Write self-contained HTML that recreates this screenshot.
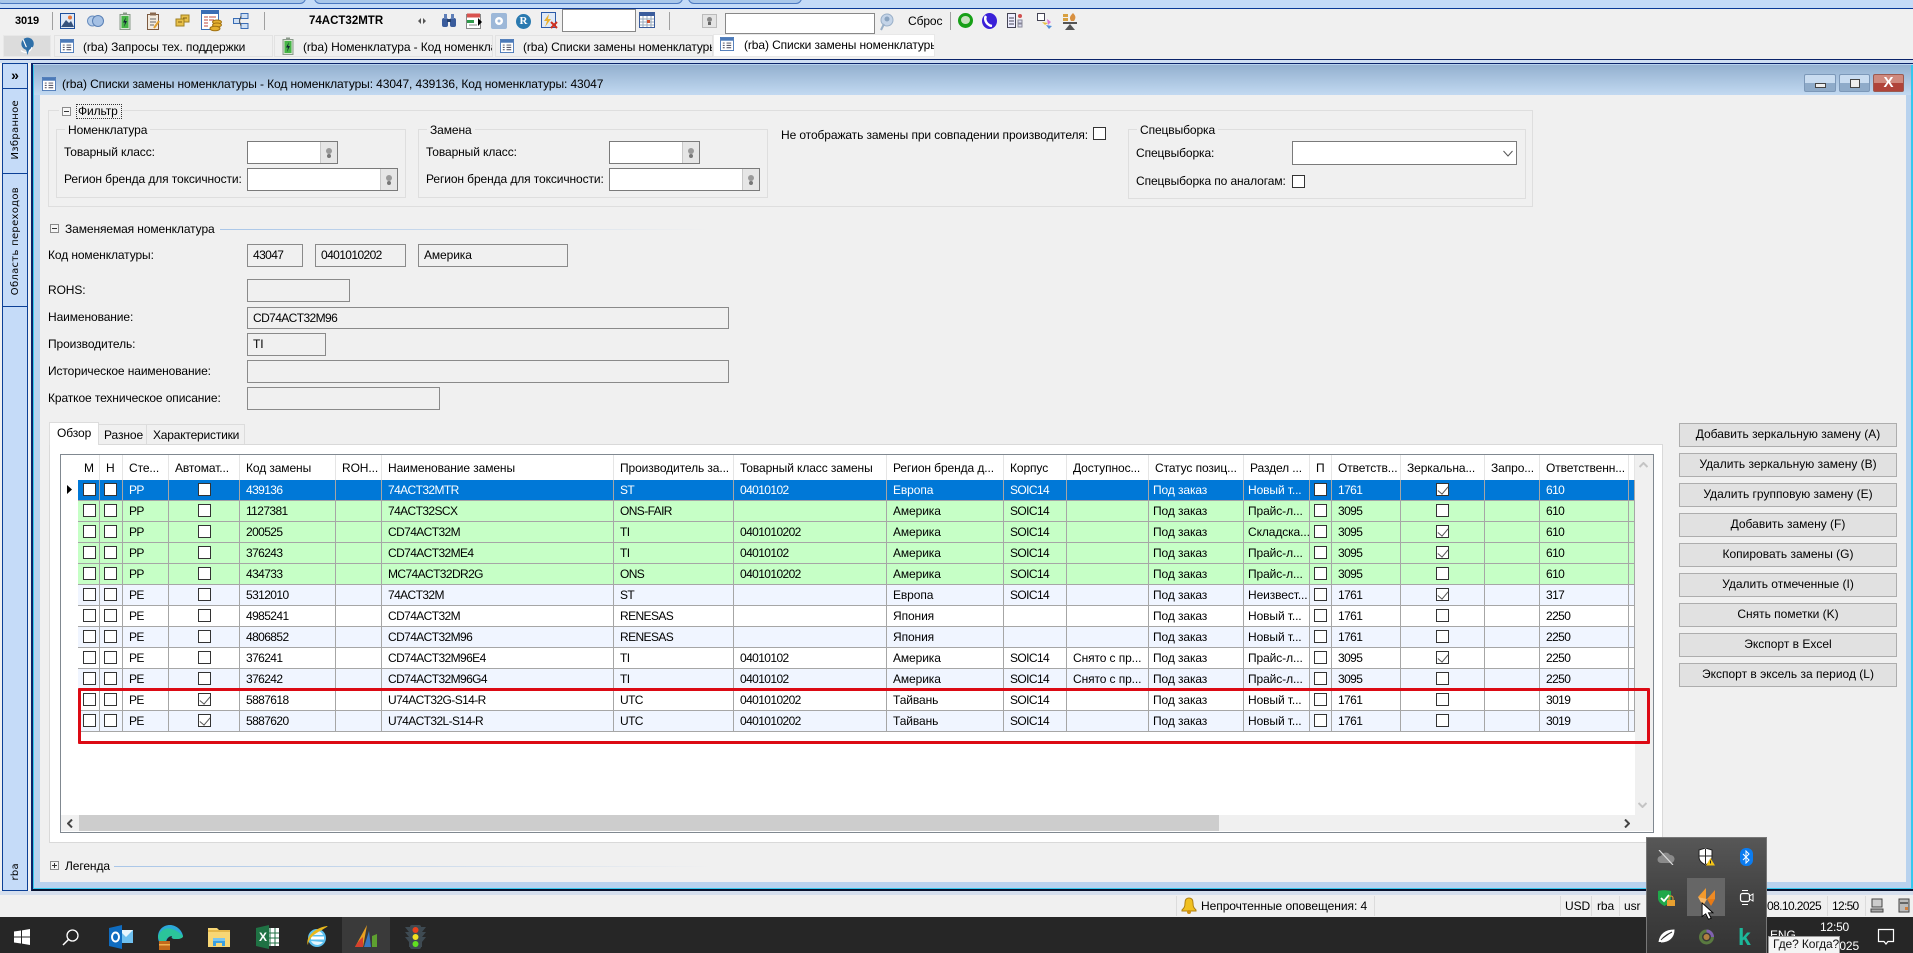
<!DOCTYPE html>
<html lang="ru"><head><meta charset="utf-8"><title>Списки замены номенклатуры</title>
<style>
*{box-sizing:border-box}
html,body{margin:0;padding:0;width:1913px;height:953px;overflow:hidden;background:#f0f0f0}
body{position:relative;font:12px/16px "Liberation Sans","Noto Sans CJK SC",sans-serif;color:#000}
.a,.t,.b,.i,svg.s{position:absolute}
.t{white-space:nowrap;height:16px;letter-spacing:-.1px}
.b{border:1px solid #8a8a8a;background:#f0f0f0;padding:2px 5px 0;line-height:17px;white-space:nowrap;letter-spacing:-.1px}
.d{letter-spacing:-.6px}
.w{background:#fff;border:1px solid #7a7a7a}
.pk{position:absolute;right:0;top:0;bottom:0;width:17px;background:#e6e6e6;border-left:1px solid #c8c8c8}
.pk:after{content:"";position:absolute;left:5px;top:6px;width:6px;height:6px;border-radius:50%;background:#9a9a9a;box-shadow:0 5px 0 -1px #777}
.fs{position:absolute;border:1px solid #dedede}
.cb{position:absolute;width:13px;height:13px;background:#fff;border:1px solid #333}
.tg{position:absolute;width:9px;height:9px;border:1px solid #8b8b8b;background:#f6f6f6}
.tg:before{content:"";position:absolute;left:1px;top:3px;width:5px;height:1px;background:#333}
.tg.p:after{content:"";position:absolute;left:3px;top:1px;width:1px;height:5px;background:#333}
.tb{position:absolute;top:35px;height:22px;background:#f0f0f0;border:1px solid #e2e2e2;overflow:hidden;white-space:nowrap;padding:3px 0 0;letter-spacing:-.1px}
.btn{position:absolute;left:1679px;width:218px;height:24px;background:#e1e1e1;border:1px solid #adadad;text-align:center;line-height:21px;white-space:nowrap}
.side{position:absolute;left:2px;width:26px;background:#c5dbf8;border:1px solid #0b3f96}
.vt{position:absolute;left:6px;writing-mode:vertical-rl;transform:rotate(180deg);font:10px/13px "DejaVu Sans",sans-serif;white-space:nowrap;letter-spacing:.3px}
table{position:absolute;left:78px;top:455px;width:1557px;border-collapse:separate;border-spacing:0;table-layout:fixed;background:#fff}
th{height:25px;font-weight:normal;text-align:left;padding:0 0 0 6px;border-right:1px solid #e5e5e5;white-space:nowrap;overflow:hidden;letter-spacing:-.1px}
td{height:21px;padding:0 0 0 6px;border-right:1px solid #a6a6a6;border-bottom:1px solid #a6a6a6;white-space:nowrap;overflow:hidden;position:relative;letter-spacing:-.1px}
td:nth-child(3),td:nth-child(5),td:nth-child(7),td:nth-child(8),td:nth-child(9),td:nth-child(11),td:nth-child(16),td:nth-child(19){letter-spacing:-.6px}
td.n{padding-left:4px}
td i{position:absolute;left:5px;top:3px;width:13px;height:13px;background:#fff;border:1px solid #333;display:block}
td i.m{left:29px}
td i.m2{left:35px}
td i.k:after{content:"";position:absolute;left:3px;top:0;width:5px;height:9px;border:solid #555;border-width:0 1px 1px 0;transform:rotate(40deg)}
tr.s td{background:#0078d7;color:#fff}
tr.g td{background:#c6ffc6}
tr.e td{background:#f0f5ff}
tr.o td{background:#fff}
.sep{position:absolute;width:1px;background:#a0a0a0}
.ss{position:absolute;top:896px;height:20px;width:1px;background:#dcdcdc}
</style></head><body>
<svg width="0" height="0" style="position:absolute"><defs>
<symbol id="doc" viewBox="0 0 15 15"><rect x=".5" y=".5" width="14" height="14" fill="#fff" stroke="#4c7ab8"/><rect x="1" y="1" width="13" height="3" fill="#4c7ab8"/><path d="M3 6.5h2M7 6.5h5M3 9h2M7 9h5M3 11.5h2M7 11.5h5" stroke="#445" stroke-width="1"/></symbol>
<symbol id="bat" viewBox="0 0 12 18"><rect x="1" y="2.500" width="10" height="15" fill="#d7e6d2" stroke="#8a9a8a"/><rect x="4" y=".5" width="4" height="2" fill="#8a9a8a"/><rect x="2.500" y="4" width="7" height="12" fill="#46b546"/><path d="M7 5 4 10.500h2L5 15l3-6H6z" fill="#123"/></symbol>
</defs></svg>

<!-- top band -->
<div class="a" style="left:0;top:0;width:1913px;height:8px;background:#c4dbf8"></div>
<div class="a" style="left:-4px;top:-3px;width:310px;height:7px;background:#a9c7ea;border:1px solid #4a78c0;border-radius:0 0 6px 6px"></div>
<div class="a" style="left:314px;top:-3px;width:369px;height:7px;background:#a9c7ea;border:1px solid #4a78c0;border-radius:0 0 6px 6px"></div>
<div class="a" style="left:688px;top:-3px;width:114px;height:7px;background:#a9c7ea;border:1px solid #4a78c0;border-radius:0 0 6px 6px"></div>
<div class="a" style="left:0;top:8px;width:1913px;height:1px;background:#0b3a96"></div>

<!-- toolbar -->
<div class="t" style="left:15px;top:13px;font-weight:bold;font-size:11px">3019</div>
<div class="sep" style="left:52px;top:12px;height:18px"></div>
<svg class="s" style="left:60px;top:13px" width="15" height="16" viewBox="0 0 15 16"><rect x=".5" y=".5" width="14" height="15" fill="#dfe9f6" stroke="#1c4f9c"/><path d="M1 14 6 7l3 3 2-2 3 6z" fill="#35527c"/><circle cx="10" cy="4.500" r="2" fill="#e8773a"/></svg>
<svg class="s" style="left:87px;top:14px" width="17" height="14" viewBox="0 0 17 14"><circle cx="5.500" cy="7" r="5" fill="#b5cdea" stroke="#6a8fc0"/><circle cx="11" cy="7" r="5.500" fill="#a4c0e4" stroke="#5a80b5"/></svg>
<svg class="s" style="left:119px;top:12px" width="12" height="18"><use href="#bat"/></svg>
<svg class="s" style="left:147px;top:12px" width="13" height="18" viewBox="0 0 13 18"><rect x=".5" y="2.500" width="11" height="15" fill="#f4ece0" stroke="#7c5a40"/><rect x="3" y=".5" width="6" height="3" fill="#8a6a50"/><path d="M3 7h6M3 10h6M3 13h4" stroke="#666"/><path d="M12 9l-5 7" stroke="#e0a030" stroke-width="2"/></svg>
<svg class="s" style="left:175px;top:14px" width="15" height="14" viewBox="0 0 15 14"><rect x="6" y="1" width="8" height="7" fill="#e8c04a" stroke="#a08020"/><rect x="1" y="5" width="8" height="7" fill="#e8c04a" stroke="#a08020"/><path d="M3 8h4M8 4h4" stroke="#806010"/></svg>
<svg class="s" style="left:201px;top:10px" width="22" height="22" viewBox="0 0 22 22"><rect x=".5" y=".5" width="17" height="19" fill="#fff" stroke="#3a6db5"/><rect x="1" y="1" width="16" height="3" fill="#3a6db5"/><path d="M3 7h4M8 7h7M3 10h4M8 10h5M3 13h4M3 16h4" stroke="#c0483c"/><ellipse cx="16" cy="12" rx="4.500" ry="2" fill="#e5b030" stroke="#a07010"/><ellipse cx="16" cy="15" rx="4.500" ry="2" fill="#e5b030" stroke="#a07010"/><ellipse cx="14" cy="18.500" rx="5" ry="2.300" fill="#e5b030" stroke="#a07010"/></svg>
<svg class="s" style="left:233px;top:13px" width="16" height="16" viewBox="0 0 16 16"><rect x="8" y=".5" width="7" height="5" fill="#cfe0f4" stroke="#3a6db5"/><rect x=".5" y="5.500" width="6" height="5" fill="#cfe0f4" stroke="#3a6db5"/><rect x="8" y="10.500" width="7" height="5" fill="#cfe0f4" stroke="#3a6db5"/><path d="M6.500 8 8 3M6.500 8 8 13" stroke="#555" fill="none"/></svg>
<div class="sep" style="left:264px;top:12px;height:18px"></div>
<div class="t" style="left:309px;top:13px;font-weight:bold;font-size:11.5px;letter-spacing:0">74ACT32MTR</div>
<svg class="s" style="left:418px;top:17px" width="8" height="8" viewBox="0 0 8 8"><path d="M3 1 0 4l3 3zM5 1l3 3-3 3z" fill="#555"/></svg>
<svg class="s" style="left:441px;top:13px" width="16" height="15" viewBox="0 0 16 15"><rect x="1" y="5" width="6" height="9" rx="2" fill="#3a5c9c"/><rect x="9" y="5" width="6" height="9" rx="2" fill="#3a5c9c"/><rect x="3" y="1" width="3" height="5" fill="#5f7fb8"/><rect x="10" y="1" width="3" height="5" fill="#5f7fb8"/><rect x="6" y="6" width="4" height="3" fill="#24406e"/></svg>
<svg class="s" style="left:466px;top:12px" width="16" height="18" viewBox="0 0 16 18"><rect x=".5" y="2.500" width="14" height="14" fill="#fff" stroke="#888"/><rect x="1" y="1.500" width="13" height="4" fill="#d9534f"/><rect x="1" y="8" width="7" height="3" fill="#2e9a4a"/><path d="M3 13h8" stroke="#888"/><path d="M12 6l4 4-4 4z" fill="#000"/></svg>
<svg class="s" style="left:491px;top:13px" width="16" height="16" viewBox="0 0 16 16"><rect width="16" height="16" rx="2" fill="#9db8d8"/><circle cx="8" cy="8" r="4" fill="#fff"/><circle cx="8" cy="8" r="1.500" fill="#9db8d8"/></svg>
<div class="a" style="left:516px;top:14px;width:15px;height:15px;border-radius:50%;background:#2a7ab0;color:#fff;font:bold 11px/15px 'Liberation Serif',serif;text-align:center">R</div>
<svg class="s" style="left:541px;top:12px" width="17" height="18" viewBox="0 0 17 18"><rect x=".5" y=".5" width="14" height="15" fill="#dfe9f6" stroke="#2a5aa8"/><path d="M8 2 3 9h3L4 15l6-8H7z" fill="#e8b030"/><path d="M10 10l6 6M16 10l-6 6" stroke="#d03020" stroke-width="2"/></svg>
<div class="a w" style="left:562px;top:9px;width:74px;height:23px;border-color:#888"></div>
<svg class="s" style="left:639px;top:12px" width="16" height="16" viewBox="0 0 16 16"><rect x=".5" y=".5" width="15" height="15" fill="#fff" stroke="#3a5c9c"/><rect x="1" y="1" width="14" height="3" fill="#3a5c9c"/><path d="M1 7h14M1 10h14M1 13h14M4 4v11M8 4v11M12 4v11" stroke="#9ab"/><rect x="8" y="8" width="3" height="3" fill="#d05030"/></svg>
<div class="sep" style="left:669px;top:12px;height:18px"></div>
<div class="a" style="left:702px;top:14px;width:15px;height:14px;background:#e4e4e4;border:1px solid #bbb"><span class="a" style="left:4px;top:2px;width:5px;height:5px;border-radius:50%;background:#888"></span><span class="a" style="left:5px;top:7px;width:3px;height:3px;background:#666"></span></div>
<div class="a w" style="left:725px;top:13px;width:150px;height:21px;border-color:#888"></div>
<svg class="s" style="left:879px;top:13px" width="15" height="18" viewBox="0 0 15 18"><circle cx="8" cy="7" r="6" fill="#c4d4e8" stroke="#9ab0c8"/><circle cx="8" cy="6" r="2.500" fill="#8aa4c0"/><path d="M5 11 2 17" stroke="#9ab0c8" stroke-width="2"/></svg>
<div class="t" style="left:908px;top:13px">Сброс</div>
<div class="sep" style="left:950px;top:12px;height:18px"></div>
<div class="a" style="left:958px;top:13px;width:15px;height:15px;border-radius:50%;background:#17a017"><span class="a" style="left:3px;top:3px;width:9px;height:8px;border-radius:50%;background:#c8e0c0"></span></div>
<div class="a" style="left:982px;top:13px;width:15px;height:16px;border-radius:50%;background:#3a20d8"></div>
<svg class="s" style="left:984px;top:15px" width="10" height="12" viewBox="0 0 10 12"><path d="M2 1C0 4 2 10 8 11" stroke="#fff" stroke-width="2.500" fill="none"/></svg>
<svg class="s" style="left:1007px;top:13px" width="16" height="15" viewBox="0 0 16 15"><rect x=".5" y=".5" width="8" height="14" fill="#eef" stroke="#445"/><path d="M2 5h5M2 8h5M2 11h5" stroke="#445"/><circle cx="13" cy="3" r="2" fill="#d05050"/><rect x="11" y="7" width="4" height="3" fill="#dde" stroke="#889"/><rect x="11" y="11" width="4" height="3" fill="#dde" stroke="#889"/></svg>
<svg class="s" style="left:1037px;top:13px" width="17" height="17" viewBox="0 0 17 17"><rect x=".5" y=".5" width="7" height="7" fill="#fff" stroke="#445"/><path d="M5 9l3 3 3-2z" fill="#e8c040"/><path d="M10 6l4 3-3 3z" fill="#d878d8"/><path d="M9 12l3 4 3-3z" fill="#5090d8"/></svg>
<svg class="s" style="left:1062px;top:12px" width="16" height="19" viewBox="0 0 16 19"><rect x="1" y="2" width="5" height="3" fill="#d8a040"/><rect x="1" y="6" width="5" height="3" fill="#d8a040"/><path d="M11 1c3 3 3 5 1 8H9c-2-3-1-5 2-8z" fill="#d89040"/><rect x="1" y="10" width="14" height="2" fill="#555"/><path d="M8 12 3 18h10z" fill="#555"/></svg>

<!-- tabs -->
<div class="a" style="left:3px;top:35px;width:48px;height:22px;background:#dcdcdc;border:1px solid #e8e8e8"></div>
<svg class="s" style="left:18px;top:37px" width="18" height="18" viewBox="0 0 15 16"><circle cx="8" cy="6" r="5.500" fill="#2e6fa8"/><path d="M4 2l5 12M2 12c4 3 8 2 10-3" stroke="#fff" stroke-width="1" fill="none"/><path d="M6 9l2 7 2-7z" fill="#2e6fa8"/></svg>
<div class="tb" style="left:54px;width:219px;padding-left:28px">(rba) Запросы тех. поддержки</div>
<svg class="s" style="left:60px;top:39px" width="14" height="14"><use href="#doc"/></svg>
<div class="tb" style="left:274px;width:219px;padding-left:28px">(rba) Номенклатура - Код номенклатуры</div>
<svg class="s" style="left:282px;top:37px" width="12" height="18"><use href="#bat"/></svg>
<div class="tb" style="left:495px;width:218px;padding-left:27px">(rba) Списки замены номенклатуры</div>
<svg class="s" style="left:500px;top:39px" width="14" height="14"><use href="#doc"/></svg>
<div class="tb" style="left:713px;top:34px;width:222px;height:23px;background:#fff;padding-left:30px;padding-top:2px;border-color:#e8e8e8">(rba) Списки замены номенклатуры</div>
<svg class="s" style="left:720px;top:37px" width="14" height="14"><use href="#doc"/></svg>

<div class="a" style="left:0;top:59px;width:1913px;height:1px;background:#0a246a"></div>
<div class="a" style="left:0;top:60px;width:1913px;height:3px;background:#cfdef2"></div>

<!-- sidebar -->
<div class="side" style="top:63px;height:26px;font:bold 14px/22px 'Liberation Sans',sans-serif;text-align:center">»</div>
<div class="side" style="top:88px;height:86px"><span class="vt" style="top:11px">Избранное</span></div>
<div class="side" style="top:173px;height:134px"><span class="vt" style="top:13px">Область переходов</span></div>
<div class="side" style="top:306px;height:585px"><span class="vt" style="top:556px">rba</span></div>

<!-- window -->
<div class="a" style="left:31px;top:63px;width:1882px;height:828px;background:#b8d2ee;border-left:2px solid #0a246a;border-top:1px solid #0a246a;border-bottom:2px solid #07122e"></div>
<div class="a" style="left:33px;top:65px;width:1880px;height:824px;border:1px solid #35c8ee;border-right-width:2px"></div>
<div class="a" style="left:34px;top:65px;width:1877px;height:30px;background:linear-gradient(#93b0cf,#c2d9f1)"></div>
<svg class="s" style="left:42px;top:77px" width="14" height="14"><use href="#doc"/></svg>
<div class="t" style="left:62px;top:76px">(rba) Списки замены номенклатуры - Код номенклатуры: 43047, 439136, Код номенклатуры: 43047</div>
<div class="a" style="left:1804px;top:74px;width:32px;height:18px;border:1px solid #7c98b8;border-radius:2px;background:linear-gradient(#c9dcf0 50%,#8fabc9 50%)"><span class="a" style="left:10px;top:8px;width:11px;height:5px;background:#eee;border:1px solid #444"></span></div>
<div class="a" style="left:1839px;top:74px;width:31px;height:18px;border:1px solid #7c98b8;border-radius:2px;background:linear-gradient(#c9dcf0 50%,#8fabc9 50%)"><span class="a" style="left:10px;top:4px;width:10px;height:9px;background:#eee;border:1px solid #444"></span></div>
<div class="a" style="left:1873px;top:74px;width:31px;height:18px;border:1px solid #9c5a50;border-radius:2px;background:linear-gradient(#d08a7e 50%,#b0443a 50%);color:#fff;font:bold 15px/16px 'Liberation Sans',sans-serif;text-align:center">X</div>

<!-- client -->
<div class="a" style="left:40px;top:95px;width:1866px;height:787px;background:#f0f0f0"></div>

<!-- filter -->
<div class="fs" style="left:48px;top:110px;width:1485px;height:97px"></div>
<div class="a" style="left:59px;top:104px;width:64px;height:16px;background:#f0f0f0"></div>
<div class="tg" style="left:62px;top:107px"></div>
<div class="a" style="left:76px;top:104px;width:46px;height:15px;border:1px dotted #333"></div>
<div class="t" style="left:78px;top:103px">Фильтр</div>

<div class="fs" style="left:56px;top:129px;width:350px;height:69px"></div>
<div class="a t" style="left:65px;top:122px;background:#f0f0f0;padding:0 3px">Номенклатура</div>
<div class="t" style="left:64px;top:144px">Товарный класс:</div>
<div class="a w" style="left:247px;top:141px;width:91px;height:23px"><span class="pk"></span></div>
<div class="t" style="left:64px;top:171px">Регион бренда для токсичности:</div>
<div class="a w" style="left:247px;top:168px;width:151px;height:23px"><span class="pk"></span></div>

<div class="fs" style="left:418px;top:129px;width:350px;height:69px"></div>
<div class="a t" style="left:427px;top:122px;background:#f0f0f0;padding:0 3px">Замена</div>
<div class="t" style="left:426px;top:144px">Товарный класс:</div>
<div class="a w" style="left:609px;top:141px;width:91px;height:23px"><span class="pk"></span></div>
<div class="t" style="left:426px;top:171px">Регион бренда для токсичности:</div>
<div class="a w" style="left:609px;top:168px;width:151px;height:23px"><span class="pk"></span></div>

<div class="t" style="left:781px;top:127px">Не отображать замены при совпадении производителя:</div>
<div class="cb" style="left:1093px;top:127px"></div>

<div class="fs" style="left:1128px;top:129px;width:398px;height:70px"></div>
<div class="a t" style="left:1137px;top:122px;background:#f0f0f0;padding:0 3px">Спецвыборка</div>
<div class="t" style="left:1136px;top:145px">Спецвыборка:</div>
<div class="a w" style="left:1292px;top:141px;width:225px;height:24px"></div>
<svg class="s" style="left:1503px;top:150px" width="10" height="7" viewBox="0 0 10 7"><path d="M.5 1 5 6l4.500-5" stroke="#555" fill="none"/></svg>
<div class="t" style="left:1136px;top:173px">Спецвыборка по аналогам:</div>
<div class="cb" style="left:1292px;top:175px"></div>

<!-- replaced -->
<div class="tg" style="left:50px;top:224px"></div>
<div class="t" style="left:65px;top:221px">Заменяемая номенклатура</div>
<div class="a" style="left:220px;top:229px;width:490px;height:1px;background:linear-gradient(90deg,#a9c6e8,#f0f0f0)"></div>

<div class="t" style="left:48px;top:247px">Код номенклатуры:</div>
<div class="b d" style="left:247px;top:244px;width:56px;height:23px">43047</div>
<div class="b d" style="left:315px;top:244px;width:91px;height:23px">0401010202</div>
<div class="b" style="left:418px;top:244px;width:150px;height:23px">Америка</div>
<div class="t" style="left:48px;top:282px">ROHS:</div>
<div class="b" style="left:247px;top:279px;width:103px;height:23px"></div>
<div class="t" style="left:48px;top:309px">Наименование:</div>
<div class="b d" style="left:247px;top:307px;width:482px;height:22px">CD74ACT32M96</div>
<div class="t" style="left:48px;top:336px">Производитель:</div>
<div class="b" style="left:247px;top:333px;width:79px;height:23px">TI</div>
<div class="t" style="left:48px;top:363px">Историческое наименование:</div>
<div class="b" style="left:247px;top:360px;width:482px;height:23px"></div>
<div class="t" style="left:48px;top:390px">Краткое техническое описание:</div>
<div class="b" style="left:247px;top:387px;width:193px;height:23px"></div>

<!-- tab control -->
<div class="a" style="left:49px;top:444px;width:1614px;height:399px;background:#fff;border:1px solid #d9d9d9"></div>
<div class="a" style="left:49px;top:422px;width:50px;height:23px;background:#fff;border:1px solid #dcdcdc;border-bottom:0;padding:2px 0 0 7px;letter-spacing:-.1px">Обзор</div>
<div class="a" style="left:99px;top:424px;width:48px;height:20px;background:#f0f0f0;border:1px solid #dcdcdc;border-bottom:0;border-left:0;padding:2px 0 0 5px;letter-spacing:-.1px">Разное</div>
<div class="a" style="left:147px;top:424px;width:98px;height:20px;background:#f0f0f0;border:1px solid #dcdcdc;border-bottom:0;border-left:0;padding:2px 0 0 6px;letter-spacing:-.2px;white-space:nowrap">Характеристики</div>

<!-- grid -->
<div class="a" style="left:60px;top:454px;width:1594px;height:379px;background:#fff;border:1px solid #808890"></div>
<svg class="s" style="left:67px;top:485px" width="6" height="9"><path d="M0 0l5 4.500L0 9z" fill="#000"/></svg>
<table>
<colgroup><col style="width:22px"><col style="width:23px"><col style="width:46px"><col style="width:71px"><col style="width:96px"><col style="width:46px"><col style="width:232px"><col style="width:120px"><col style="width:153px"><col style="width:117px"><col style="width:63px"><col style="width:82px"><col style="width:95px"><col style="width:66px"><col style="width:22px"><col style="width:69px"><col style="width:84px"><col style="width:55px"><col style="width:89px"><col style="width:6px"></colgroup>
<tr><th>М</th><th>Н</th><th>Сте...</th><th>Автомат...</th><th>Код замены</th><th>ROH...</th><th>Наименование замены</th><th>Производитель за...</th><th>Товарный класс замены</th><th>Регион бренда д...</th><th>Корпус</th><th>Доступнос...</th><th>Статус позиц...</th><th>Раздел ...</th><th>П</th><th>Ответств...</th><th>Зеркальна...</th><th>Запро...</th><th>Ответственн...</th><th></th></tr>
<tr class="s"><td><i></i></td><td><i style="left:4px"></i></td><td>PP</td><td><i class="m"></i></td><td>439136</td><td></td><td>74ACT32MTR</td><td>ST</td><td>04010102</td><td>Европа</td><td>SOIC14</td><td></td><td class="n">Под заказ</td><td class="n">Новый т...</td><td><i style="left:4px"></i></td><td>1761</td><td><i class="m2 k"></i></td><td></td><td>610</td><td></td></tr>
<tr class="g"><td><i></i></td><td><i style="left:4px"></i></td><td>PP</td><td><i class="m"></i></td><td>1127381</td><td></td><td>74ACT32SCX</td><td>ONS-FAIR</td><td></td><td>Америка</td><td>SOIC14</td><td></td><td class="n">Под заказ</td><td class="n">Прайс-л...</td><td><i style="left:4px"></i></td><td>3095</td><td><i class="m2"></i></td><td></td><td>610</td><td></td></tr>
<tr class="g"><td><i></i></td><td><i style="left:4px"></i></td><td>PP</td><td><i class="m"></i></td><td>200525</td><td></td><td>CD74ACT32M</td><td>TI</td><td>0401010202</td><td>Америка</td><td>SOIC14</td><td></td><td class="n">Под заказ</td><td class="n">Складска...</td><td><i style="left:4px"></i></td><td>3095</td><td><i class="m2 k"></i></td><td></td><td>610</td><td></td></tr>
<tr class="g"><td><i></i></td><td><i style="left:4px"></i></td><td>PP</td><td><i class="m"></i></td><td>376243</td><td></td><td>CD74ACT32ME4</td><td>TI</td><td>04010102</td><td>Америка</td><td>SOIC14</td><td></td><td class="n">Под заказ</td><td class="n">Прайс-л...</td><td><i style="left:4px"></i></td><td>3095</td><td><i class="m2 k"></i></td><td></td><td>610</td><td></td></tr>
<tr class="g"><td><i></i></td><td><i style="left:4px"></i></td><td>PP</td><td><i class="m"></i></td><td>434733</td><td></td><td>MC74ACT32DR2G</td><td>ONS</td><td>0401010202</td><td>Америка</td><td>SOIC14</td><td></td><td class="n">Под заказ</td><td class="n">Прайс-л...</td><td><i style="left:4px"></i></td><td>3095</td><td><i class="m2"></i></td><td></td><td>610</td><td></td></tr>
<tr class="e"><td><i></i></td><td><i style="left:4px"></i></td><td>PE</td><td><i class="m"></i></td><td>5312010</td><td></td><td>74ACT32M</td><td>ST</td><td></td><td>Европа</td><td>SOIC14</td><td></td><td class="n">Под заказ</td><td class="n">Неизвест...</td><td><i style="left:4px"></i></td><td>1761</td><td><i class="m2 k"></i></td><td></td><td>317</td><td></td></tr>
<tr class="o"><td><i></i></td><td><i style="left:4px"></i></td><td>PE</td><td><i class="m"></i></td><td>4985241</td><td></td><td>CD74ACT32M</td><td>RENESAS</td><td></td><td>Япония</td><td></td><td></td><td class="n">Под заказ</td><td class="n">Новый т...</td><td><i style="left:4px"></i></td><td>1761</td><td><i class="m2"></i></td><td></td><td>2250</td><td></td></tr>
<tr class="e"><td><i></i></td><td><i style="left:4px"></i></td><td>PE</td><td><i class="m"></i></td><td>4806852</td><td></td><td>CD74ACT32M96</td><td>RENESAS</td><td></td><td>Япония</td><td></td><td></td><td class="n">Под заказ</td><td class="n">Новый т...</td><td><i style="left:4px"></i></td><td>1761</td><td><i class="m2"></i></td><td></td><td>2250</td><td></td></tr>
<tr class="o"><td><i></i></td><td><i style="left:4px"></i></td><td>PE</td><td><i class="m"></i></td><td>376241</td><td></td><td>CD74ACT32M96E4</td><td>TI</td><td>04010102</td><td>Америка</td><td>SOIC14</td><td>Снято с пр...</td><td class="n">Под заказ</td><td class="n">Прайс-л...</td><td><i style="left:4px"></i></td><td>3095</td><td><i class="m2 k"></i></td><td></td><td>2250</td><td></td></tr>
<tr class="e"><td><i></i></td><td><i style="left:4px"></i></td><td>PE</td><td><i class="m"></i></td><td>376242</td><td></td><td>CD74ACT32M96G4</td><td>TI</td><td>04010102</td><td>Америка</td><td>SOIC14</td><td>Снято с пр...</td><td class="n">Под заказ</td><td class="n">Прайс-л...</td><td><i style="left:4px"></i></td><td>3095</td><td><i class="m2"></i></td><td></td><td>2250</td><td></td></tr>
<tr class="o"><td><i></i></td><td><i style="left:4px"></i></td><td>PE</td><td><i class="m k"></i></td><td>5887618</td><td></td><td>U74ACT32G-S14-R</td><td>UTC</td><td>0401010202</td><td>Тайвань</td><td>SOIC14</td><td></td><td class="n">Под заказ</td><td class="n">Новый т...</td><td><i style="left:4px"></i></td><td>1761</td><td><i class="m2"></i></td><td></td><td>3019</td><td></td></tr>
<tr class="e"><td><i></i></td><td><i style="left:4px"></i></td><td>PE</td><td><i class="m k"></i></td><td>5887620</td><td></td><td>U74ACT32L-S14-R</td><td>UTC</td><td>0401010202</td><td>Тайвань</td><td>SOIC14</td><td></td><td class="n">Под заказ</td><td class="n">Новый т...</td><td><i style="left:4px"></i></td><td>1761</td><td><i class="m2"></i></td><td></td><td>3019</td><td></td></tr>
</table>
<!-- scrollbars -->
<div class="a" style="left:1635px;top:455px;width:18px;height:360px;background:#f0f0f0"></div>
<svg class="s" style="left:1639px;top:462px" width="9" height="6" viewBox="0 0 9 6"><path d="M.5 5 4.500 1l4 4" stroke="#c4c4c4" stroke-width="2" fill="none"/></svg>
<svg class="s" style="left:1638px;top:802px" width="9" height="6" viewBox="0 0 9 6"><path d="M.5 1l4 4 4-4" stroke="#c4c4c4" stroke-width="2" fill="none"/></svg>
<div class="a" style="left:61px;top:815px;width:1592px;height:16px;background:#f0f0f0"></div>
<div class="a" style="left:79px;top:815px;width:1140px;height:16px;background:#cdcdcd"></div>
<svg class="s" style="left:67px;top:819px" width="6" height="9" viewBox="0 0 6 9"><path d="M5 .5 1 4.500l4 4" stroke="#444" stroke-width="2" fill="none"/></svg>
<svg class="s" style="left:1624px;top:819px" width="6" height="9" viewBox="0 0 6 9"><path d="M1 .5l4 4-4 4" stroke="#444" stroke-width="2" fill="none"/></svg>
<!-- red rect -->
<div class="a" style="left:78px;top:688px;width:1572px;height:56px;border:3px solid #dc0a14;border-radius:1px"></div>

<!-- buttons -->
<div class="btn" style="top:423px">Добавить зеркальную замену (A)</div>
<div class="btn" style="top:453px">Удалить зеркальную замену (B)</div>
<div class="btn" style="top:483px">Удалить групповую замену (E)</div>
<div class="btn" style="top:513px">Добавить замену (F)</div>
<div class="btn" style="top:543px">Копировать замены (G)</div>
<div class="btn" style="top:573px">Удалить отмеченные (I)</div>
<div class="btn" style="top:603px">Снять пометки (K)</div>
<div class="btn" style="top:633px">Экспорт в Excel</div>
<div class="btn" style="top:663px">Экспорт в эксель за период (L)</div>

<!-- legend -->
<div class="tg p" style="left:50px;top:861px"></div>
<div class="t" style="left:65px;top:858px">Легенда</div>
<div class="a" style="left:114px;top:866px;width:600px;height:1px;background:linear-gradient(90deg,#a9c6e8,#f0f0f0)"></div>

<!-- status -->
<div class="a" style="left:0;top:891px;width:1913px;height:4px;background:#d5dfee"></div>
<div class="a" style="left:0;top:895px;width:1913px;height:22px;background:#f0f0f0"></div>
<div class="ss" style="left:1176px"></div>
<svg class="s" style="left:1181px;top:897px" width="16" height="17" viewBox="0 0 16 17"><path d="M8 1c-3 0-4 2-4 5 0 4-1 5-3 7v1h14v-1c-2-2-3-3-3-7 0-3-1-5-4-5z" fill="#f0c020" stroke="#b08010"/><circle cx="8" cy="15" r="2" fill="#d09010"/></svg>
<div class="t" style="left:1201px;top:898px;letter-spacing:-.05px">Непрочтенные оповещения: 4</div>
<div class="ss" style="left:1374px"></div>
<div class="ss" style="left:1560px"></div><div class="t" style="left:1565px;top:898px">USD</div>
<div class="ss" style="left:1591px"></div><div class="t" style="left:1597px;top:898px">rba</div>
<div class="ss" style="left:1619px"></div><div class="t" style="left:1624px;top:898px">usr</div>
<div class="t" style="left:1767px;top:898px;letter-spacing:-.6px">08.10.2025</div>
<div class="ss" style="left:1827px"></div><div class="t" style="left:1832px;top:898px;letter-spacing:-.7px">12:50</div>
<div class="ss" style="left:1865px"></div>
<svg class="s" style="left:1870px;top:898px" width="14" height="15" viewBox="0 0 14 15"><rect x="2" y="1" width="10" height="8" fill="#ccc" stroke="#444"/><rect x="1" y="11" width="12" height="3" fill="#aaa" stroke="#444"/></svg>
<svg class="s" style="left:1898px;top:898px" width="12" height="15" viewBox="0 0 12 15"><rect x="1" y="1" width="10" height="13" fill="#bbb" stroke="#444"/><rect x="2" y="4" width="8" height="2" fill="#666"/><rect x="7" y="9" width="3" height="3" fill="#d08040"/></svg>

<!-- taskbar -->
<div class="a" style="left:0;top:917px;width:1913px;height:36px;background:#262626"></div>
<div class="a" style="left:342px;top:917px;width:48px;height:36px;background:#3a3a3a"></div>
<svg class="s" style="left:14px;top:929px" width="16" height="16" viewBox="0 0 16 16"><path d="M0 2.500 7 1.500v6H0zM8 1.400 16 0v7.500H8zM0 8.500h7v6l-7-1zM8 8.500h8V16l-8-1.400z" fill="#fff"/></svg>
<svg class="s" style="left:62px;top:929px" width="17" height="17" viewBox="0 0 17 17"><circle cx="10.500" cy="6.500" r="5.500" fill="none" stroke="#fff" stroke-width="1.300"/><path d="M6.500 10.500 1 16" stroke="#fff" stroke-width="1.500"/></svg>
<svg class="s" style="left:109px;top:925px" width="24" height="24" viewBox="0 0 24 24"><rect x="10" y="5" width="14" height="13" fill="#6fc0ef"/><path d="M10 5l7 7 7-7z" fill="#fff" opacity=".85"/><path d="M0 3 13 0v24L0 21z" fill="#0f6cc0"/><ellipse cx="6.500" cy="12" rx="3.500" ry="4.500" fill="none" stroke="#fff" stroke-width="2"/></svg>
<svg class="s" style="left:158px;top:925px" width="25" height="25" viewBox="0 0 25 25"><path d="M12 0C18 0 24 5 25 11c0 2-3 3-7 3-4 0-5-1-4-3-3 0-6 3-6 7 0 3 1 5 3 6C5 24 0 18 0 12 0 5 5 0 12 0z" fill="#2ca8d8"/><path d="M0 12C2 5 8 2 14 4c4 1 8 4 11 7 0 2-3 3-7 3-2 0-4 0-4-3-4 0-7 3-7 8C3 17 1 15 0 12z" fill="#2bc49a"/><rect x="1" y="16" width="11" height="9" fill="#c26a1c"/><rect x="1" y="19" width="11" height="1.500" fill="#f0b050"/></svg>
<svg class="s" style="left:208px;top:927px" width="22" height="20" viewBox="0 0 22 20"><path d="M0 1h9l2 2h11v17H0z" fill="#f8d775"/><rect x="0" y="3" width="22" height="2" fill="#e5b84a"/><path d="M5 19v-5h12v5h-3v-3H8v3z" fill="#3aa0e0"/><rect x="5" y="11" width="12" height="3" fill="#7ac6f0"/></svg>
<svg class="s" style="left:256px;top:925px" width="23" height="24" viewBox="0 0 23 24"><rect x="11" y="3" width="12" height="18" fill="#fff"/><path d="M14 3v18M19 3v18M11 8h12M11 13h12M11 18h12" stroke="#1f7244"/><path d="M0 3 13 0v24L0 21z" fill="#1f7244"/><text x="3" y="16" font-family="Liberation Sans" font-size="12" font-weight="bold" fill="#fff">X</text></svg>
<svg class="s" style="left:305px;top:925px" width="24" height="24" viewBox="0 0 24 24"><circle cx="12" cy="13" r="9" fill="#5bc0f0"/><rect x="6" y="11.500" width="13" height="3" fill="#fff"/><path d="M6 10a6.500 6.500 0 0 1 12 0zM6 16a7 7 0 0 0 12 1" fill="#fff" opacity=".85"/><path d="M3 20C0 14 8 3 22 1c2 0-2 2-5 4C8 9 3 15 3 20z" fill="#e8b81c"/></svg>
<svg class="s" style="left:354px;top:925px" width="24" height="24" viewBox="0 0 24 24"><path d="M13 0 1 22h8z" fill="#e8a020"/><path d="M1 22c3-6 6-8 8-10l0 10z" fill="#d8402c"/><path d="M15 6l-5 16h7z" fill="#3a78c0"/><path d="M18 11v11h5V9z" fill="#5ea030"/></svg>
<svg class="s" style="left:405px;top:925px" width="21" height="24" viewBox="0 0 21 24"><path d="M0 2h21l-4 5h4l-4 5h4l-4 5v5H4v-5l-4-5h4L0 7h4z" fill="#3e4a52"/><rect x="5" y="0" width="11" height="24" rx="2" fill="#3e4a52"/><circle cx="10.500" cy="5" r="3" fill="#e8401c"/><circle cx="10.500" cy="12" r="3" fill="#f0e020"/><circle cx="10.500" cy="19" r="3" fill="#60e020"/></svg>
<div class="t" style="left:1770px;top:927px;color:#fff">ENG</div>
<div class="t" style="left:1820px;top:919px;color:#fff;letter-spacing:-.2px">12:50</div>
<div class="t" style="left:1800px;top:938px;color:#fff">08.10.2025</div>
<div class="a" style="left:1768px;top:936px;width:72px;height:17px;background:#f4f4f4;border:1px solid #999;border-bottom:0;color:#111;padding:0 0 0 4px;white-space:nowrap;line-height:15px;letter-spacing:-.1px">Где? Когда?</div>
<svg class="s" style="left:1877px;top:928px" width="18" height="18" viewBox="0 0 18 18"><path d="M1.500 1.500h15v12H11l-2 2.500-2-2.500H1.500z" fill="none" stroke="#fff" stroke-width="1.200"/></svg>

<!-- tray -->
<div class="a" style="left:1646px;top:837px;width:121px;height:116px;background:linear-gradient(#575757,#3f3f3f 60%,#343434);border:1px solid #777;border-bottom:0"></div>
<div class="a" style="left:1687px;top:878px;width:38px;height:38px;background:#666"></div>
<svg class="s" style="left:1657px;top:850px" width="18" height="15" viewBox="0 0 18 15"><path d="M4 13a3.500 3.500 0 0 1 0-7 5 5 0 0 1 9-1 4 4 0 0 1 1 8z" fill="#8a8a8a"/><path d="M2 0 16 15" stroke="#ddd" stroke-width="1.200"/></svg>
<svg class="s" style="left:1698px;top:848px" width="18" height="18" viewBox="0 0 18 18"><path d="M7.500 0 14 2v7c0 4-3 6-6.500 8C4 15 1 13 1 9V2z" fill="#fff" stroke="#222"/><path d="M7.500 1v15M1.500 8h12" stroke="#222"/><path d="M12.500 10l4.500 7.500H8z" fill="#f3c316"/><rect x="12" y="12.500" width="1" height="3" fill="#222"/></svg>
<div class="a" style="left:1740px;top:848px;width:13px;height:18px;border-radius:6px;background:#0b7cf0"></div>
<svg class="s" style="left:1742px;top:850px" width="9" height="14" viewBox="0 0 9 14"><path d="M1 4l6 6-3 3V1l3 3-6 6" stroke="#fff" fill="none"/></svg>
<svg class="s" style="left:1658px;top:889px" width="17" height="18" viewBox="0 0 17 18"><path d="M0 2C4 1 8 1 13 2v7c0 4-3 6-6.500 8C3 15 0 13 0 9z" fill="#1fa84a"/><path d="M3 9l3 3 5-6" stroke="#fff" stroke-width="1.800" fill="none"/><rect x="9" y="11" width="8" height="6" fill="#e8a030"/><path d="M11 11V9a2 2 0 0 1 4 0v2" stroke="#e8a030" fill="none"/></svg>
<svg class="s" style="left:1698px;top:888px" width="17" height="18" viewBox="0 0 17 18"><path d="M8 0 0 9l8 2z" fill="#f59a2c"/><path d="M0 9l5 9 4-7z" fill="#f8b868"/><path d="M9 11 17 2v9z" fill="#ef8a24"/><path d="M9 11h8l-4 7z" fill="#e87a14"/></svg>
<svg class="s" style="left:1739px;top:889px" width="15" height="17" viewBox="0 0 15 17"><rect x="1.500" y="4.500" width="9" height="8" rx="2" fill="none" stroke="#fff" stroke-width="1.200"/><path d="M10.500 7l3.500-2v7l-3.500-2" fill="none" stroke="#fff"/><path d="M3 1.500h6M3 15.500h6" stroke="#fff"/></svg>
<svg class="s" style="left:1701px;top:902px" width="14" height="19" viewBox="0 0 15 21"><path d="M1 1v15l4-3 3 6 3-1-3-6h5z" fill="#fff" stroke="#000"/></svg>
<svg class="s" style="left:1658px;top:929px" width="17" height="15" viewBox="0 0 17 15"><path d="M1 13C2 5 8 1 16 1c0 7-5 12-13 12" fill="#fff" stroke="#fff"/><path d="M3 11C6 7 10 5 14 3" stroke="#333"/></svg>
<svg class="s" style="left:1699px;top:929px" width="15" height="16" viewBox="0 0 15 16"><circle cx="7.500" cy="8" r="6" fill="none" stroke="#5a7a40" stroke-width="3"/><circle cx="7.500" cy="8" r="3" fill="#b08040"/><path d="M7.500 2a6 6 0 0 1 6 6" stroke="#8060b0" stroke-width="3" fill="none"/></svg>
<div class="a" style="left:1738px;top:926px;font:bold 23px/22px 'Liberation Sans',sans-serif;color:#1cb89a">k</div>
</body></html>
